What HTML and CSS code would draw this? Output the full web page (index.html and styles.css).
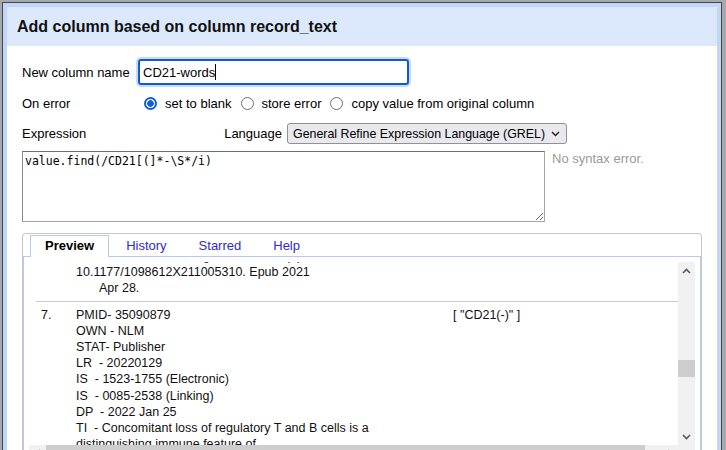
FILE: index.html
```html
<!DOCTYPE html>
<html lang="en">
<head>
<meta charset="utf-8">
<title>Add column</title>
<link rel="stylesheet" href="styles.css">
</head>
<body>
<div class="dialog">
  <div class="dialog-inner">
    <div class="dialog-header">Add column based on column record_text</div>
    <div class="dialog-body">
      <div class="row row-name">
        <span class="label">New column name</span>
        <div class="text-input" role="textbox">CD21-words<span class="caret"></span></div>
      </div>
      <div class="row row-error">
        <span class="label">On error</span>
        <div class="radios">
          <span class="radio checked"></span><span class="radio-label">set to blank</span>
          <span class="radio"></span><span class="radio-label">store error</span>
          <span class="radio"></span><span class="radio-label">copy value from original column</span>
        </div>
      </div>
      <div class="row row-expr">
        <span class="label">Expression</span>
        <div class="lang">
          <span>Language</span>
          <div class="select">
            <span>General Refine Expression Language (GREL)</span>
            <svg class="chev" width="9" height="6" viewBox="0 0 9 6"><path d="M1 1 L4.5 4.5 L8 1" fill="none" stroke="#222" stroke-width="1.5"/></svg>
          </div>
        </div>
      </div>
      <div class="row row-code">
        <textarea class="code" spellcheck="false">value.find(/CD21[(]*-\S*/i)</textarea>
        <span class="status">No syntax error.</span>
      </div>
      <div class="tabs">
        <div class="tab-strip">
          <span class="tab active">Preview</span>
          <span class="tab">History</span>
          <span class="tab">Starred</span>
          <span class="tab">Help</span>
        </div>
        <div class="tab-panel">
          <div class="scroll-frame">
            <div class="viewport">
              <div class="preview-table">
                <div class="prow">
                  <div class="cell num">6.</div>
                  <div class="cell val">
                    <div class="line">SO  - J Feline Med Surg. 2022 Jan;24(1):e1-e10. doi:</div>
                    <div class="line">10.1177/1098612X211005310. Epub 2021</div>
                    <div class="line cont">Apr 28.</div>
                  </div>
                  <div class="cell res"></div>
                </div>
                <div class="prow">
                  <div class="cell num">7.</div>
                  <div class="cell val">
                    <div class="line">PMID- 35090879</div>
                    <div class="line">OWN - NLM</div>
                    <div class="line">STAT- Publisher</div>
                    <div class="line">LR  - 20220129</div>
                    <div class="line">IS  - 1523-1755 (Electronic)</div>
                    <div class="line">IS  - 0085-2538 (Linking)</div>
                    <div class="line">DP  - 2022 Jan 25</div>
                    <div class="line">TI  - Concomitant loss of regulatory T and B cells is a</div>
                    <div class="line">distinguishing immune feature of</div>
                    <div class="line">IgG4-related disease.</div>
                  </div>
                  <div class="cell res">[ "CD21(-)" ]</div>
                </div>
              </div>
            </div>
            <div class="vbar">
              <div class="sb-btn"><svg width="9" height="6" viewBox="0 0 9 6"><path d="M1 5 L4.5 1.5 L8 5" fill="none" stroke="#5a5a5a" stroke-width="1.6"/></svg></div>
              <div class="vtrack"><div class="vthumb"></div></div>
              <div class="sb-btn"><svg width="9" height="6" viewBox="0 0 9 6"><path d="M1 1 L4.5 4.5 L8 1" fill="none" stroke="#5a5a5a" stroke-width="1.6"/></svg></div>
            </div>
            <div class="hbar">
              <div class="sb-btn"><svg width="6" height="9" viewBox="0 0 6 9"><path d="M5 1 L1.5 4.5 L5 8" fill="none" stroke="#5a5a5a" stroke-width="1.6"/></svg></div>
              <div class="htrack"><div class="hthumb"></div></div>
              <div class="sb-btn"><svg width="6" height="9" viewBox="0 0 6 9"><path d="M1 1 L4.5 4.5 L1 8" fill="none" stroke="#5a5a5a" stroke-width="1.6"/></svg></div>
            </div>
            <div class="corner"></div>
          </div>
        </div>
      </div>
    </div>
  </div>
</div>
</body>
</html>
```
FILE: styles.css
```css
* { box-sizing: border-box; }
html, body { margin: 0; height: 450px; overflow: hidden; }
body {
  background: #a9a9a9;
  font-family: "Liberation Sans", Arial, sans-serif;
  font-size: 13px;
  color: #000;
}
.dialog {
  margin: 2px 0 0 2px;
  width: 720px;
  height: 470px;
  border: 1px solid #3f4754;
  background: #c2d7f6;
  padding: 4px 4px 0 4px;
}
.dialog-inner { background: #fff; height: 100%; }
.dialog-header {
  height: 39px;
  line-height: 39px;
  background: #dce8fb;
  padding-left: 10px;
  font-weight: bold;
  font-size: 16px;
  color: #111;
}
.dialog-body { padding: 13px 15px 0; }
.row { display: flex; align-items: center; }
.label { width: 116px; flex: none; }
.row-name { height: 26px; }
.text-input {
  width: 271px;
  height: 26px;
  border: 2px solid #1158d2;
  border-radius: 3px;
  box-shadow: 0 0 0 2px #c6dcfa;
  padding-left: 3px;
  display: flex;
  align-items: center;
}
.caret { width: 1px; height: 16px; background: #000; }
.row-error { margin-top: 9px; height: 18px; }
.radios { display: flex; align-items: center; padding-left: 6px; }
.radio {
  width: 13px;
  height: 13px;
  border: 1px solid #6f6f6f;
  border-radius: 50%;
  margin-right: 8px;
  flex: none;
}
.radio.checked {
  border: 2px solid #1560d6;
  background: radial-gradient(circle, #1560d6 0 3px, #fff 3.6px);
}
.radio-label { margin-right: 9px; }
.row-expr { margin-top: 11px; height: 21px; width: 545px; justify-content: space-between; }
.lang { display: flex; align-items: center; gap: 5px; }
.select {
  width: 280px;
  height: 21px;
  border: 1px solid #8f8f9d;
  border-radius: 3px;
  background: #e9e9ed;
  display: flex;
  align-items: center;
  justify-content: space-between;
  padding: 0 6px 0 5px;
  font-size: 12.4px;
}
.row-code { margin-top: 7px; align-items: flex-start; }
.code {
  width: 523px;
  height: 71px;
  margin: 0;
  border: 1px solid #a6a6a6;
  border-top-color: #707070;
  border-left-color: #8a8a8a;
  padding: 2px;
  font-family: "DejaVu Sans Mono", monospace;
  font-size: 11.5px;
  line-height: 15px;
  resize: both;
  color: #000;
  background: #fff;
}
.status { margin-left: 7px; color: #9a9a9a; line-height: 16px; }
.tabs {
  margin-top: 11px;
  border: 1px solid #c6c6c6;
  border-bottom: 0;
  border-radius: 4px 4px 0 0;
  padding-top: 1px;
}
.tab-strip { display: flex; gap: 2px; padding-left: 7px; height: 21px; align-items: flex-start; }
.tab {
  padding: 0 14px;
  height: 21px;
  line-height: 20px;
  color: #2c2cd6;
  border: 1px solid transparent;
  border-bottom: 0;
}
.tab.active {
  color: #000;
  font-weight: bold;
  border-color: #b8cbef;
  background: #fff;
  height: 22px;
  position: relative;
  z-index: 1;
}
.tab-panel { border: 1px solid #b8cbef; padding: 5px 5px 0 5px; }
.scroll-frame {
  display: grid;
  grid-template-columns: 1fr 17px;
  grid-template-rows: 183px 17px;
}
.viewport { overflow: hidden; }
.preview-table { margin: -19px 0 0 7px; width: 700px; }
.prow { display: flex; border-top: 1px solid #c8c8c8; }
.prow:first-child { border-top: 0; }
.cell {
  padding: 5px 5px 4px;
  line-height: 16.2px;
  font-size: 12.5px;
  white-space: nowrap;
  color: #111;
}
.line { white-space: pre; }
.num { width: 35px; flex: none; }
.val { width: 377px; flex: none; }
.res { flex: 1; }
.cont { padding-left: 23px; }
.vbar { background: #f1f1f1; display: flex; flex-direction: column; }
.sb-btn { width: 17px; height: 17px; display: flex; align-items: center; justify-content: center; flex: none; }
.vtrack { flex: 1; }
.vthumb { margin-top: 81px; height: 17px; background: #cdcdcd; }
.hbar { background: #f1f1f1; display: flex; }
.htrack { flex: 1; }
.hthumb { width: 599px; height: 17px; background: #cdcdcd; }
.corner { background: #f1f1f1; }
```
